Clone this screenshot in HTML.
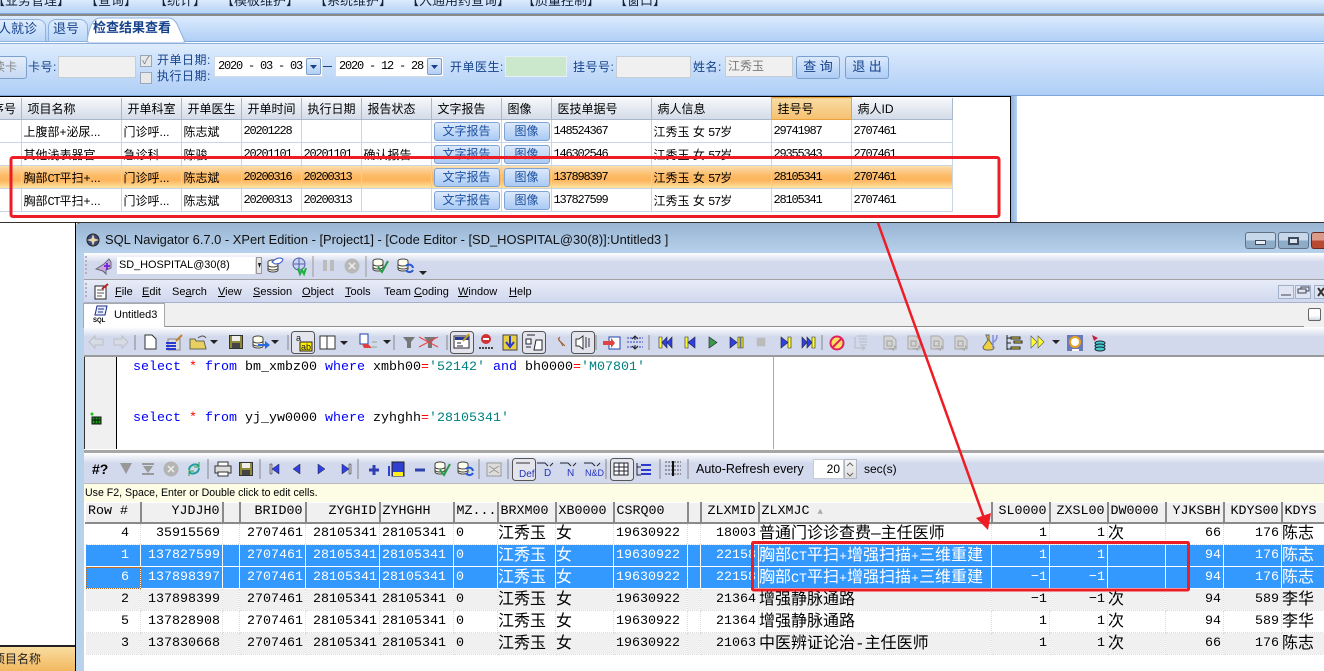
<!DOCTYPE html>
<html><head><meta charset="utf-8"><style>
html,body{margin:0;padding:0;width:1324px;height:671px;overflow:hidden;background:#fff}
body{position:relative;font:12px "Liberation Sans","Noto Sans CJK SC",sans-serif;color:#000}
.a{position:absolute;white-space:nowrap}
.l{color:#15428b;font-size:12px;line-height:14px;letter-spacing:.5px}
.top{position:absolute;white-space:nowrap;top:-6px;font-size:13px;line-height:14px;color:#15233c}
.inp{position:absolute;box-sizing:border-box;background:#f0f0f0;border:1px solid #c4ccd6}
.btn{position:absolute;box-sizing:border-box;border:1px solid #7c9fcc;border-radius:3px;background:linear-gradient(#dbe9fc,#aecdf6);color:#15428b;text-align:center}
table{border-collapse:collapse;table-layout:fixed;position:absolute}
.t1{left:0;top:97px;width:952px;font-size:12px}
.t1 th{height:22px;padding:0 0 0 6px;box-sizing:border-box;font-weight:400;text-align:left;background:linear-gradient(#f6f8fb,#d4dce8);border-right:1px solid #a9b8cc;border-bottom:1px solid #a9b8cc;overflow:hidden;white-space:nowrap}
.t1 th.o{background:linear-gradient(#f8dca4,#f5c06f);border:1px solid #eba23c}
.t1 td{height:23px;padding:0 0 0 2px;box-sizing:border-box;border-right:1px solid #c9d5e6;border-bottom:1px solid #c9d5e6;white-space:nowrap;overflow:hidden;position:relative}
.t1 tr.s td{background:linear-gradient(#fbdcaa,#fdbb68 40%,#fdb45c 62%,#fee7a6)}
.n{font-family:"Liberation Mono",monospace;letter-spacing:-1.2px}
.t1 td.b{padding:0}
.t1 td.b span{display:block;box-sizing:border-box;height:19px;line-height:17px;margin:0 1px 0 2px;border:1px solid #7fa3d2;border-radius:3px;background:linear-gradient(#dce9fb,#a9caf5);color:#1a4f9f;text-align:center}
.t2{left:85px;top:502px;width:1239px;font:13.33px/18px "Liberation Mono","Noto Sans CJK SC",monospace}
.t2 th{height:20px;line-height:16px;padding:0 2px;box-sizing:border-box;font-weight:400;background:#f0f0f0;border-top:1px solid #fff;border-left:1px solid #fff;border-right:2px solid #8a8a8a;border-bottom:2px solid #8a8a8a;white-space:nowrap;overflow:hidden;text-align:left}
.t2 th.r{text-align:right}
.t2 td{height:22px;padding:0 2px;box-sizing:border-box;border-right:1px dotted #ddd;border-bottom:1px dotted #ddd;white-space:nowrap;overflow:hidden;text-align:right}
.t2 td:first-child{padding-right:11px}
.t2 td.z{text-align:left;font-size:16px;padding-left:0}
.t2 td.z span{font-size:13.33px;line-height:1}
.t2 td.m{text-align:left}
.t2 tr.g td{background:#f0f0f0}
.t2 tr.x td{background:#3399ff;color:#fff;border-right:1px solid #fff;border-bottom:1px solid #fff}
.sql{font:13.33px/16px "Liberation Mono",monospace;color:#000}
.sql b{font-weight:400;color:#0000ff}.sql i{font-style:normal;color:#ff0000}.sql u{text-decoration:none;color:#008080}
.menu{position:absolute;white-space:nowrap;top:285px;font:11px/15px "Liberation Sans",sans-serif}
.menu u{text-decoration:underline}
.dt{position:absolute;box-sizing:border-box;top:56px;width:109px;height:21px;background:#fff;border:1px solid #d3dbe6;font:12px/19px "Liberation Mono",monospace;letter-spacing:-1.2px;padding-left:3px;white-space:pre}
</style></head><body>

<!-- main app -->
<div class="a" style="left:0;top:0;width:1324px;height:13px;background:linear-gradient(#dcebfd,#b5d2f6);border-bottom:1px solid #7da7da"></div>
<div class="a" style="left:0;top:14px;width:1324px;height:2px;background:#8a8a8a"></div>
<div class="top" style="left:-8px">【业务管理】</div>
<div class="top" style="left:85px">【查询】</div>
<div class="top" style="left:154px">【统计】</div>
<div class="top" style="left:221px">【模板维护】</div>
<div class="top" style="left:314px">【系统维护】</div>
<div class="top" style="left:406px">【入通用药查询】</div>
<div class="top" style="left:522px">【质量控制】</div>
<div class="top" style="left:614px">【窗口】</div>

<div class="a" style="left:0;top:16px;width:1324px;height:25px;background:linear-gradient(#dcebfd,#b0cff6);border-bottom:1px solid #7da7da"></div>
<div class="a" style="left:-30px;top:19px;width:76px;height:23px;box-sizing:border-box;border:1px solid #8fb2dd;border-radius:8px 8px 0 0;background:linear-gradient(#e0edfd,#bcd7f8)"></div>
<div class="a" style="left:-15px;top:21px;font-size:13px;line-height:16px;color:#15428b">病人就诊</div>
<div class="a" style="left:48px;top:19px;width:40px;height:23px;box-sizing:border-box;border:1px solid #8fb2dd;border-radius:8px 8px 0 0;background:linear-gradient(#e0edfd,#bcd7f8)"></div>
<div class="a" style="left:53px;top:21px;font-size:13px;line-height:16px;color:#15428b">退号</div>
<svg class="a" style="left:86px;top:17px" width="102" height="26" viewBox="0 0 102 26"><path d="M1 25Q4 1 14 1H82Q88 1 91 7L99 25z" fill="#fff" stroke="#8fb2dd"/><path d="M3 24h94" stroke="#fff" stroke-width="2"/></svg>
<div class="a" style="left:93px;top:20px;font-size:13px;line-height:16px;font-weight:700;color:#15428b">检查结果查看</div>

<div class="a" style="left:0;top:43px;width:1324px;height:51px;background:linear-gradient(#deecfd,#afcef6);border-bottom:1px solid #7da7da;border-top:1px solid #8db0dc"></div>

<div class="btn" style="left:-20px;top:56px;width:47px;height:23px;line-height:21px;color:#888;background:linear-gradient(#e6eefa,#c6d9f3);text-align:right;padding-right:9px">读卡</div>
<div class="a l" style="left:28px;top:60px">卡号:</div>
<div class="inp" style="left:58px;top:56px;width:78px;height:22px"></div>
<div class="a" style="left:140px;top:55px;width:12px;height:12px;box-sizing:border-box;border:1px solid #9aa7b8;background:#e8e8e8;color:#7a8494;font-size:11px;line-height:11px;text-align:center">✓</div>
<div class="a" style="left:140px;top:72px;width:12px;height:12px;box-sizing:border-box;border:1px solid #9aa7b8;background:#e8e8e8"></div>
<div class="a l" style="left:157px;top:52px;line-height:16px">开单日期:</div>
<div class="a l" style="left:157px;top:68px;line-height:16px">执行日期:</div>
<div class="dt" style="left:214px">2020 - 03 - 03</div>
<div class="a" style="left:306px;top:58px;width:15px;height:17px;box-sizing:border-box;border:1px solid #7b9ecb;border-radius:2px;background:linear-gradient(#e1edfc,#b2cff5)"></div>
<div class="a" style="left:323px;top:66px;width:9px;height:1px;background:#15428b"></div>
<div class="dt" style="left:335px">2020 - 12 - 28</div>
<div class="a" style="left:427px;top:58px;width:15px;height:17px;box-sizing:border-box;border:1px solid #7b9ecb;border-radius:2px;background:linear-gradient(#e1edfc,#b2cff5)"></div>
<div class="a l" style="left:450px;top:60px">开单医生:</div>
<div class="inp" style="left:505px;top:56px;width:62px;height:21px;background:#cce8cc;border:1px solid #e6eef8"></div>
<div class="a l" style="left:573px;top:60px">挂号号:</div>
<div class="inp" style="left:616px;top:56px;width:75px;height:22px"></div>
<div class="a l" style="left:693px;top:60px">姓名:</div>
<div class="inp" style="left:725px;top:56px;width:68px;height:21px;color:#777;line-height:18px;padding-left:2px">江秀玉</div>
<div class="btn" style="left:796px;top:56px;width:44px;height:23px;line-height:20px;font-size:13px">查 询</div>
<div class="btn" style="left:845px;top:56px;width:44px;height:23px;line-height:20px;font-size:13px">退 出</div>

<div class="a" style="left:0;top:96px;width:1011px;height:1px;background:#000"></div>
<div class="a" style="left:1010px;top:96px;width:1px;height:127px;background:#000"></div>
<div class="a" style="left:1011px;top:96px;width:6px;height:127px;background:linear-gradient(90deg,#8fb2de,#b5d0f2)"></div>
<div class="a" style="left:0;top:222px;width:1324px;height:1px;background:#333"></div>

<table class="t1"><colgroup><col style="width:21px"><col style="width:100px"><col style="width:60px"><col style="width:60px"><col style="width:60px"><col style="width:60px"><col style="width:70px"><col style="width:70px"><col style="width:50px"><col style="width:100px"><col style="width:120px"><col style="width:80px"><col style="width:101px"></colgroup>
<tr><th style="padding:0 0 0 0"><span style="margin-left:-8px">序号</span></th><th>项目名称</th><th>开单科室</th><th>开单医生</th><th>开单时间</th><th>执行日期</th><th>报告状态</th><th>文字报告</th><th>图像</th><th>医技单据号</th><th>病人信息</th><th class="o">挂号号</th><th>病人ID</th></tr>
<tr><td></td><td>上腹部+泌尿...</td><td>门诊呼...</td><td>陈志斌</td><td class="n">20201228</td><td></td><td></td><td class="b"><span>文字报告</span></td><td class="b"><span>图像</span></td><td class="n">148524367</td><td>江秀玉 女 <span class="n">57</span>岁</td><td class="n">29741987</td><td class="n">2707461</td></tr>
<tr><td></td><td>其他浅表器官</td><td>急诊科</td><td>陈骏</td><td class="n">20201101</td><td class="n">20201101</td><td>确认报告</td><td class="b"><span>文字报告</span></td><td class="b"><span>图像</span></td><td class="n">146302546</td><td>江秀玉 女 <span class="n">57</span>岁</td><td class="n">29355343</td><td class="n">2707461</td></tr>
<tr class="s"><td></td><td>胸部<span class="n">CT</span>平扫+...</td><td>门诊呼...</td><td>陈志斌</td><td class="n">20200316</td><td class="n">20200313</td><td></td><td class="b"><span>文字报告</span></td><td class="b"><span>图像</span></td><td class="n">137898397</td><td>江秀玉 女 <span class="n">57</span>岁</td><td class="n">28105341</td><td class="n">2707461</td></tr>
<tr><td></td><td>胸部<span class="n">CT</span>平扫+...</td><td>门诊呼...</td><td>陈志斌</td><td class="n">20200313</td><td class="n">20200313</td><td></td><td class="b"><span>文字报告</span></td><td class="b"><span>图像</span></td><td class="n">137827599</td><td>江秀玉 女 <span class="n">57</span>岁</td><td class="n">28105341</td><td class="n">2707461</td></tr>
</table>

<!-- bottom-left -->
<div class="a" style="left:75px;top:222px;width:1px;height:449px;background:#000"></div>
<div class="a" style="left:0;top:645px;width:75px;height:2px;background:#222"></div>
<div class="a" style="left:0;top:647px;width:75px;height:24px;background:linear-gradient(#f9dc9f,#f3b860)"></div>
<div class="a" style="left:-7px;top:651px;font-size:12px;line-height:16px;color:#222">项目名称</div>

<!-- SQL Navigator window -->
<div class="a" style="left:76px;top:222px;width:1248px;height:449px;background:#b9d2ec;border-radius:5px 0 0 0;border-top:1px solid #333;box-sizing:border-box"></div>
<div class="a" style="left:76px;top:223px;width:1248px;height:30px;background:linear-gradient(#99b5d3,#b7d1ec);border-radius:5px 0 0 0"></div>
<div class="a" style="left:105px;top:232px;font:12.9px/16px 'Liberation Sans',sans-serif;color:#111">SQL Navigator 6.7.0 - XPert Edition - [Project1] - [Code Editor - [SD_HOSPITAL@30(8)]:Untitled3 ]</div>
<div class="a" style="left:1245px;top:232px;width:31px;height:17px;box-sizing:border-box;border:1px solid #5e7186;border-radius:3px;background:linear-gradient(#c7d8ea 50%,#8eabc8 50%)"></div>
<div class="a" style="left:1278px;top:232px;width:31px;height:17px;box-sizing:border-box;border:1px solid #5e7186;border-radius:3px;background:linear-gradient(#c7d8ea 50%,#8eabc8 50%)"></div>
<div class="a" style="left:1311px;top:232px;width:13px;height:17px;box-sizing:border-box;border:1px solid #6a2a22;border-right:0;border-radius:3px 0 0 3px;background:linear-gradient(#dc9a8a 50%,#b84a32 50%)"></div>
<div class="a" style="left:1255px;top:240px;width:11px;height:5px;box-sizing:border-box;border:1px solid #3c4a5c;background:#e8eef6"></div>
<div class="a" style="left:1288px;top:237px;width:11px;height:8px;box-sizing:border-box;border:2px solid #3c4a5c;background:#dbe6f2"></div>

<!-- toolbar 1 -->
<div class="a" style="left:84px;top:253px;width:1240px;height:26px;background:linear-gradient(#fff,#d2d9ec 35%);border-bottom:1px solid #a0a0a0"></div>
<div class="a" style="left:117px;top:257px;width:138px;height:17px;background:#fff;font:10.9px/17px 'Liberation Sans',sans-serif;padding-left:2px;box-sizing:border-box">SD_HOSPITAL@30(8)</div>
<div class="a" style="left:256px;top:257px;width:6px;height:17px;background:#e6e6e6;border:1px solid #999;box-sizing:border-box"></div>

<!-- menu -->
<div class="a" style="left:84px;top:280px;width:1240px;height:22px;background:linear-gradient(#e8ecf8,#d0d8ee);border-bottom:1px solid #a9b2cc"></div>
<div class="menu" style="left:115px"><u>F</u>ile</div>
<div class="menu" style="left:142px"><u>E</u>dit</div>
<div class="menu" style="left:172px">Se<u>a</u>rch</div>
<div class="menu" style="left:218px"><u>V</u>iew</div>
<div class="menu" style="left:253px"><u>S</u>ession</div>
<div class="menu" style="left:302px"><u>O</u>bject</div>
<div class="menu" style="left:345px"><u>T</u>ools</div>
<div class="menu" style="left:384px">Team <u>C</u>oding</div>
<div class="menu" style="left:458px"><u>W</u>indow</div>
<div class="menu" style="left:509px"><u>H</u>elp</div>
<div class="a" style="left:1278px;top:285px;width:16px;height:14px;box-sizing:border-box;border:1px solid #9fb0c8;background:#dfe5f3"></div>
<div class="a" style="left:1295px;top:285px;width:16px;height:14px;box-sizing:border-box;border:1px solid #9fb0c8;background:#dfe5f3"></div>
<div class="a" style="left:1314px;top:285px;width:10px;height:14px;box-sizing:border-box;border:1px solid #9fb0c8;border-right:0;background:#dfe5f3"></div>

<!-- tab strip -->
<div class="a" style="left:84px;top:303px;width:1240px;height:25px;background:#f0f0f0"></div>
<div class="a" style="left:84px;top:326px;width:1220px;height:1px;background:#8f8f8f"></div>
<div class="a" style="left:83px;top:303px;width:82px;height:25px;box-sizing:border-box;background:#fff;border:1px solid #a8a8a8;border-bottom:0"></div>
<div class="a" style="left:114px;top:307px;font:11px/16px 'Liberation Sans',sans-serif">Untitled3</div>
<div class="a" style="left:93px;top:318px;font:bold 6px/7px 'Liberation Sans',sans-serif">SQL</div>
<div class="a" style="left:1308px;top:308px;width:13px;height:13px;box-sizing:border-box;border:1px solid #666;border-radius:2px;background:linear-gradient(#fff 60%,#cfd6e0)"></div>

<!-- toolbar 3 -->
<div class="a" style="left:84px;top:327px;width:1240px;height:28px;background:linear-gradient(#fff,#d2d9ec 35%);border-bottom:2px solid #9a9a9a"></div>

<!-- editor -->
<div class="a" style="left:84px;top:357px;width:1240px;height:92px;background:#fff"></div>
<div class="a" style="left:84px;top:357px;width:32px;height:92px;background:#f0f0f0;border-left:1px solid #333;box-sizing:border-box"></div>
<div class="a" style="left:116px;top:357px;width:1px;height:92px;background:#000"></div>
<div class="a" style="left:773px;top:357px;width:1px;height:92px;background:#aaa"></div>
<div class="a sql" style="left:133px;top:360px"><b>select</b> <i>*</i> <b>from</b> bm_xmbz00 <b>where</b> xmbh00<i>=</i><u>'52142'</u> <b>and</b> bh0000<i>=</i><u>'M07801'</u></div>
<div class="a sql" style="left:133px;top:411px"><b>select</b> <i>*</i> <b>from</b> yj_yw0000 <b>where</b> zyhghh<i>=</i><u>'28105341'</u></div>

<div class="a" style="left:84px;top:449px;width:1240px;height:4px;background:#a6a6a6;border-top:1px solid #fff;box-sizing:border-box"></div>
<!-- grid toolbar -->
<div class="a" style="left:84px;top:453px;width:1240px;height:31px;background:linear-gradient(#fff,#d2d9ec 35%);border-bottom:1px solid #bbb;box-sizing:border-box"></div>
<div class="a" style="left:92px;top:461px;font:bold 14px/16px 'Liberation Sans',sans-serif">#?</div>
<div class="a" style="left:696px;top:462px;font:12.5px/15px 'Liberation Sans',sans-serif">Auto-Refresh every</div>
<div class="a" style="left:813px;top:459px;width:31px;height:20px;box-sizing:border-box;border:1px solid #c6cbd6;background:#fff;text-align:right;padding-right:3px;font:12px/18px 'Liberation Sans',sans-serif">20</div>
<div class="a" style="left:844px;top:459px;width:13px;height:20px;box-sizing:border-box;border:1px solid #b0b6c2;background:linear-gradient(#f5f5f5,#ddd)"></div>
<div class="a" style="left:864px;top:462px;font:12px/15px 'Liberation Sans',sans-serif">sec(s)</div>

<div class="a" style="left:84px;top:484px;width:1240px;height:18px;background:#fdfde6"></div>
<div class="a" style="left:85px;top:486px;font:10.6px/14px 'Liberation Sans',sans-serif">Use F2, Space, Enter or Double click to edit cells.</div>

<div class="a" style="left:84px;top:502px;width:1240px;height:169px;background:#fff"></div>
<table class="t2"><colgroup><col style="width:55px"><col style="width:82px"><col style="width:17px"><col style="width:66px"><col style="width:74px"><col style="width:74px"><col style="width:44px"><col style="width:58px"><col style="width:58px"><col style="width:74px"><col style="width:13px"><col style="width:58px"><col style="width:233px"><col style="width:58px"><col style="width:58px"><col style="width:58px"><col style="width:58px"><col style="width:58px"><col style="width:43px"></colgroup>
<tr><th>Row #</th><th class="r">YJDJH0</th><th></th><th class="r">BRID00</th><th class="r">ZYGHID</th><th>ZYHGHH</th><th>MZ...</th><th>BRXM00</th><th>XB0000</th><th>CSRQ00</th><th></th><th class="r">ZLXMID</th><th>ZLXMJC <em style="font-style:normal;color:#aaa;font-size:9px">▲</em></th><th class="r">SL0000</th><th class="r">ZXSL00</th><th>DW0000</th><th class="r">YJKSBH</th><th class="r">KDYS00</th><th>KDYS</th></tr>
<tr><td>4</td><td>35915569</td><td></td><td>2707461</td><td>28105341</td><td class="m">28105341</td><td class="m">0</td><td class="z">江秀玉</td><td class="z">女</td><td class="m">19630922</td><td></td><td>18003</td><td class="z">普通门诊诊查费—主任医师</td><td>1</td><td>1</td><td class="z">次</td><td>66</td><td>176</td><td class="z">陈志</td></tr>
<tr class="x"><td>1</td><td>137827599</td><td></td><td>2707461</td><td>28105341</td><td class="m">28105341</td><td class="m">0</td><td class="z">江秀玉</td><td class="z">女</td><td class="m">19630922</td><td></td><td>22158</td><td class="z">胸部<span>CT</span>平扫<span>+</span>增强扫描<span>+</span>三维重建</td><td>1</td><td>1</td><td class="z"></td><td>94</td><td>176</td><td class="z">陈志</td></tr>
<tr class="x"><td style="outline:1px dotted #b5651d;outline-offset:-1px">6</td><td>137898397</td><td></td><td>2707461</td><td>28105341</td><td class="m">28105341</td><td class="m">0</td><td class="z">江秀玉</td><td class="z">女</td><td class="m">19630922</td><td></td><td>22158</td><td class="z">胸部<span>CT</span>平扫<span>+</span>增强扫描<span>+</span>三维重建</td><td>−1</td><td>−1</td><td class="z"></td><td>94</td><td>176</td><td class="z">陈志</td></tr>
<tr class="g"><td>2</td><td>137898399</td><td></td><td>2707461</td><td>28105341</td><td class="m">28105341</td><td class="m">0</td><td class="z">江秀玉</td><td class="z">女</td><td class="m">19630922</td><td></td><td>21364</td><td class="z">增强静脉通路</td><td>−1</td><td>−1</td><td class="z">次</td><td>94</td><td>589</td><td class="z">李华</td></tr>
<tr><td>5</td><td>137828908</td><td></td><td>2707461</td><td>28105341</td><td class="m">28105341</td><td class="m">0</td><td class="z">江秀玉</td><td class="z">女</td><td class="m">19630922</td><td></td><td>21364</td><td class="z">增强静脉通路</td><td>1</td><td>1</td><td class="z">次</td><td>94</td><td>589</td><td class="z">李华</td></tr>
<tr class="g"><td>3</td><td>137830668</td><td></td><td>2707461</td><td>28105341</td><td class="m">28105341</td><td class="m">0</td><td class="z">江秀玉</td><td class="z">女</td><td class="m">19630922</td><td></td><td>21063</td><td class="z">中医辨证论治-主任医师</td><td>1</td><td>1</td><td class="z">次</td><td>66</td><td>176</td><td class="z">陈志</td></tr>
</table>

<!-- icons -->
<svg class="a" style="left:0;top:0" width="1324" height="671" viewBox="0 0 1324 671">
<defs>
<g id="db"><ellipse cx="6" cy="3" rx="5" ry="2" fill="#ffe" stroke="#444"/><path d="M1 3v8c0 1 2 2 5 2s5-1 5-2V3M1 6c0 1 2 2 5 2s5-1 5-2M1 9c0 1 2 2 5 2s5-1 5-2" fill="#ffe" stroke="#444"/></g>
<g id="dbc"><use href="#db"/><path d="M6 9l4 5 6-11" fill="none" stroke="#2a9a4a" stroke-width="2"/></g>
<g id="dbs"><use href="#db"/><path d="M9 8a4 4 0 0 1 7 2M16 12a4 4 0 0 1-7 0" fill="none" stroke="#2a5ad0" stroke-width="2"/></g>
<g id="save"><rect x=".5" y=".5" width="13" height="13" fill="#8e8a3a" stroke="#333"/><rect x="3" y="1" width="8" height="5" fill="#eee"/><rect x="3" y="8" width="8" height="5" fill="#444"/></g>
<g id="ar"><path d="M0 0h8l-4 4z" fill="#222"/></g>
<g id="pb"><rect x=".5" y=".5" width="23" height="22" rx="3" fill="#e4e4ec" stroke="#555"/></g>
<g id="gray"><path d="M2 1h8l4 4v9H2z" fill="#d4d4d4" stroke="#a8a8a8"/><rect x="5" y="6" width="5" height="5" fill="none" stroke="#a0a0a0"/><path d="M6 13h9l-3-3v6z" fill="#aaa"/></g>
<g id="tb"><path d="M0 0h12l-4 5v6H4V5z" fill="#777"/></g>
</defs>
<!-- window logo -->
<circle cx="93" cy="240" r="6" fill="#3d4a7a" stroke="#222"/><path d="M93 234l1.500 4.500 4.500 1.500-4.500 1.500-1.500 4.500-1.500-4.500-4.500-1.500 4.500-1.500z" fill="#e8d8a8"/>
<!-- toolbar1 -->
<g fill="#b0b0c0"><rect x="85" y="256" width="2" height="2"/><rect x="85" y="260" width="2" height="2"/><rect x="85" y="264" width="2" height="2"/><rect x="85" y="268" width="2" height="2"/><rect x="85" y="272" width="2" height="2"/></g>
<path d="M96 269l8-5 5-5 2 3v6l-5 2v4l-3-3z" fill="#c8a8d8" stroke="#667"/><path d="M104 266h6M107 263v7" stroke="#7a2ad8" stroke-width="2"/>
<path d="M258 263h3l-1.500 5z" fill="#111"/>
<use href="#db" x="267" y="259"/><path d="M272 262q6-6 11-3-1 5-8 5z" fill="#fff" stroke="#3355cc"/>
<circle cx="299" cy="264" r="6" fill="#c8d2f2" stroke="#5560a8"/><path d="M293 264h12M299 258v12" stroke="#5560a8"/><path d="M298 268l2 6 2-4 2 4 2-6" fill="none" stroke="#20b040" stroke-width="2"/>
<path d="M313 256v21" stroke="#999"/><rect x="323" y="260" width="4" height="11" fill="#bbb"/><rect x="330" y="260" width="4" height="11" fill="#bbb"/>
<circle cx="352" cy="266" r="7.500" fill="#b8b8b8"/><path d="M349 263l6 6m0-6l-6 6" stroke="#eee" stroke-width="1.500"/><path d="M366 256v21" stroke="#999"/>
<use href="#dbc" x="372" y="258"/><use href="#dbs" x="397" y="258"/><use href="#ar" x="419" y="271"/>
<!-- menu icon -->
<rect x="95" y="286" width="11" height="13" fill="#fff" stroke="#222"/><path d="M97 290h7M97 293h7M97 296h5" stroke="#555"/><path d="M102 289l6-5" stroke="#c02020" stroke-width="2"/>
<g fill="#b0b0c0"><rect x="85" y="283" width="2" height="2"/><rect x="85" y="287" width="2" height="2"/><rect x="85" y="291" width="2" height="2"/><rect x="85" y="295" width="2" height="2"/></g>
<path d="M1281 295h10M1298 293h8v-4h-8zM1301 289v-2h8v4h-3" stroke="#445" fill="none"/><path d="M1318 288l6 8m0-8l-6 8" stroke="#333" stroke-width="2"/>
<!-- tab icon -->
<path d="M97 306h10l-2 9H95z" fill="#e8f0fb" stroke="#1a2a8a"/><path d="M98 309h6M98 312h5" stroke="#1a2a8a"/>
<!-- toolbar 3 -->
<g transform="translate(0 335)">
<path d="M89 7l6-6v3h8v6h-8v3z M128 7l-6-6v3h-8v6h8v3z" fill="#d7dbe3" stroke="#bcbfc8"/>
<path d="M135 0v15M288 0v15M394 0v15M447 0v15M596 0v15M649 0v15M822 0v15" stroke="#888"/>
<path d="M145 0h7l4 4v10h-11z" fill="#fff" stroke="#333"/>
<path d="M168 4h12v11h-12z" fill="#ddd" stroke="#888"/><path d="M166 8h10M166 11h10M166 14h10" stroke="#2a3ad0" stroke-width="2"/><path d="M176 6l6-6" stroke="#c08030" stroke-width="2"/>
<path d="M190 14V4h5l1 2h8l2 8z" fill="#e8d060" stroke="#665"/><path d="M198 3q5-4 8 0" fill="none" stroke="#555"/>
<use href="#ar" x="210" y="5"/><use href="#save" x="229" y="0"/><use href="#db" x="252" y="0"/><path d="M258 9h7v-3l5 4-5 4v-3h-7z" fill="#2a6ae0"/><use href="#ar" x="271" y="5"/>
</g>
<use href="#pb" x="291" y="331"/><text x="296" y="341" font-family="Liberation Sans" font-size="9" fill="#112">a</text><rect x="300" y="342" width="12" height="9" fill="#ffee00" stroke="#222"/><text x="301" y="350" font-family="Liberation Sans" font-size="9" fill="#112">ab</text>
<rect x="320" y="336" width="15" height="13" fill="#fff" stroke="#333"/><path d="M327 336v13" stroke="#333"/><use href="#ar" x="340" y="341"/>
<rect x="360" y="334" width="8" height="10" fill="#fff" stroke="#24a"/><path d="M362 344h6l4 4h-8z" fill="#e04040"/><path d="M372 342h5M372 347h5" stroke="#8a8"/><use href="#ar" x="383" y="340"/>
<use href="#tb" x="403" y="337"/><g transform="translate(424 337)"><use href="#tb"/><path d="M-5 0l19 10M14 0L-5 10" stroke="#f04040"/></g>
<use href="#pb" x="450" y="331"/><rect x="454" y="336" width="15" height="12" fill="#fff" stroke="#223"/><rect x="455" y="337" width="14" height="3" fill="#2a3a90"/><path d="M457 343h4M457 346h6" stroke="#223"/><path d="M463 341l6-7" stroke="#c0a020" stroke-width="2"/>
<circle cx="486" cy="339" r="5" fill="#d03030"/><rect x="483" y="338" width="6" height="2" fill="#fff"/><path d="M479 348h14" stroke="#444" stroke-width="2" stroke-dasharray="2 1"/>
<rect x="503" y="335" width="14" height="15" fill="#e8d040" stroke="#444"/><path d="M510 336v9m-4-3l4 5 4-5" fill="none" stroke="#2a3ad0" stroke-width="2"/>
<use href="#pb" x="522" y="331"/><path d="M527 335h8M526 339h5v5h-5zM526 347h5M536 340h6v10h-8z" fill="#fff" stroke="#223"/>
<path d="M558 338l5 8m-3-9q-3 3 1 5l4 4" fill="none" stroke="#a06030"/>
<use href="#pb" x="571" y="331"/><path d="M576 339h3l4-3v13l-4-3h-3z" fill="#fff" stroke="#333"/><path d="M586 337v11M589 338v9" stroke="#334"/>
<rect x="609" y="337" width="11" height="12" fill="#fff" stroke="#24a"/><path d="M603 341h8v-3l4 5-4 5v-3h-8z" fill="#e04040"/>
<path d="M627 338h16M627 347h16M627 342h16" stroke="#3344cc" stroke-dasharray="2 1"/><path d="M635 336v4m-3-1l3-3 3 3M635 349v-4m-3 1l3 3 3-3" fill="none" stroke="#222"/>
<!-- nav -->
<g transform="translate(0 337)" stroke="#223" stroke-width=".6">
<path d="M659 0h3v11h-3z" fill="#ffff30"/><path d="M667 0v11l-5-5.500zM672 0v11l-5-5.500z" fill="#3040e0"/>
<path d="M685 0h3v11h-3z" fill="#ffff30"/><path d="M695 0v11l-7-5.500z" fill="#3040e0"/>
<path d="M709 0v11l8-5.500z" fill="#3a9a4a"/>
<path d="M730 0v11l7-5.500z" fill="#3040e0"/><path d="M738 0h2v11h-2zM741 0h2v11h-2z" fill="#ffff30"/>
<rect x="757" y="1" width="8" height="8" fill="#bbb" stroke="#bbb"/>
<path d="M781 0v11l7-5.500z" fill="#3040e0"/><path d="M788 0h3v11h-3z" fill="#ffff30"/>
<path d="M802 0v11l5-5.500zM807 0v11l5-5.500z" fill="#3040e0"/><path d="M812 0h3v11h-3z" fill="#ffff30"/>
</g>
<path d="M855 337v11h9M857 336h10M859 339h8M859 342h8M860 345h7" stroke="#b8bcc4" fill="none"/><path d="M862 346l3 2-3 2" stroke="#b8bcc4" fill="none"/>
<circle cx="837" cy="343" r="6.500" fill="#ffe060" stroke="#e02060" stroke-width="2"/><path d="M832 348l10-10" stroke="#e02060" stroke-width="2"/>
<use href="#gray" x="882" y="335"/><use href="#gray" x="906" y="335"/><use href="#gray" x="929" y="335"/><use href="#gray" x="953" y="335"/>
<path d="M986 335h3v5l5 7q0 3-4 3h-3q-4 0-4-3l5-7z" fill="#f0d040" stroke="#665"/><path d="M993 335v13M997 335q0 6-4 7" stroke="#8090d8" stroke-width="1.500" fill="none"/>
<path d="M1007 335v15M1007 338h4M1007 343h4M1007 349h4" stroke="#222" fill="none"/><path d="M1011 337h9v2h-9zM1014 341h8v2h-8zM1011 347h9v2h-9z" fill="#f0e040" stroke="#222"/>
<path d="M1031 336l6 6-6 6zM1038 336l6 6-6 6z" fill="#ffff30" stroke="#555" stroke-width=".6"/><use href="#ar" x="1052" y="340"/>
<rect x="1067" y="335" width="16" height="16" fill="#6a7ab8"/><circle cx="1075" cy="342" r="5" fill="#fff" stroke="#eaa020" stroke-width="2"/><path d="M1072 350h7" stroke="#fff" stroke-width="2"/>
<path d="M1092 335l6 3-4 3z" fill="#c02040"/><ellipse cx="1100" cy="343" rx="5" ry="2" fill="#40d0d0" stroke="#223"/><ellipse cx="1100" cy="346" rx="5" ry="2" fill="#40d0d0" stroke="#223"/><ellipse cx="1100" cy="349" rx="5" ry="2" fill="#40d0d0" stroke="#223"/>
<!-- gutter icon -->
<circle cx="92" cy="414" r="1.500" fill="#20c020"/><rect x="92" y="417" width="9" height="7" fill="#14a014" stroke="#111"/><path d="M95 417v7M98 417v7M92 420h9" stroke="#111"/>
<!-- grid toolbar icons -->
<path d="M120 463h12l-6 11zM142 463h12v2h-12zM143 466h10l-5 7h-0zM142 473h12v2h-12z" fill="#999"/>
<circle cx="171" cy="469" r="7.500" fill="#b4b4b4"/><path d="M168 466l6 6m0-6l-6 6" stroke="#eee" stroke-width="1.500"/>
<path d="M189 470a6 6 0 0 1 10-4M199 468a6 6 0 0 1-10 4" fill="none" stroke="#20a0a0" stroke-width="2"/><path d="M199 462v5h-5M189 476v-5h5" fill="none" stroke="#30a040"/>
<path d="M208 459v20M260 459v20M358 459v20M479 459v20M508 459v20M606 459v20M660 459v20M688 459v20" stroke="#888"/>
<rect x="215" y="466" width="16" height="7" fill="#ddd" stroke="#333"/><rect x="218" y="462" width="10" height="4" fill="#fff" stroke="#333"/><rect x="218" y="472" width="10" height="4" fill="#fff" stroke="#333"/>
<use href="#save" x="239" y="462"/>
<g stroke="#223" stroke-width=".5"><path d="M270 464h2v10h-2z" fill="#ccc"/><path d="M279 464v10l-7-5z" fill="#3040e0"/><path d="M300 464v10l-7-5z" fill="#3040e0"/><path d="M318 464v10l7-5z" fill="#3040e0"/><path d="M342 464v10l7-5z" fill="#3040e0"/><path d="M349 464h2v10h-2z" fill="#ccc"/></g>
<path d="M369 470h10M374 465v10" stroke="#3040b0" stroke-width="3"/>
<rect x="392" y="462" width="12" height="14" fill="#3040d0" stroke="#222"/><rect x="393" y="472" width="10" height="4" fill="#ffee20"/><path d="M389 466v10" stroke="#3040d0" stroke-width="2"/>
<path d="M415 470h10" stroke="#3040b0" stroke-width="3"/>
<use href="#dbc" x="434" y="461"/><use href="#dbs" x="457" y="461"/>
<rect x="487" y="463" width="14" height="13" fill="#ddd" stroke="#999"/><path d="M489 466l5 3 5-3M489 473l5-3 5 3" fill="none" stroke="#999"/>
<use href="#pb" x="512" y="458"/><text x="519" y="477" font-family="Liberation Sans" font-size="10" fill="#2233bb">Def</text><path d="M516 463h14" stroke="#333"/>
<path d="M537 463h8l3 3M553 463l-3 3" stroke="#223" fill="none"/><text x="544" y="476" font-family="Liberation Sans" font-size="10" fill="#2233bb">D</text><path d="M560 463h8l3 3M576 463l-3 3" stroke="#223" fill="none"/><text x="567" y="476" font-family="Liberation Sans" font-size="10" fill="#2233bb">N</text><path d="M584 463h8l3 3M600 463l-3 3" stroke="#223" fill="none"/><text x="585" y="476" font-family="Liberation Sans" font-size="9" fill="#2233bb">N&amp;D</text>
<use href="#pb" x="610" y="458"/><rect x="614" y="463" width="14" height="12" fill="#fff" stroke="#223"/><path d="M614 467h14M614 471h14M619 463v12M624 463v12" stroke="#223"/>
<path d="M637 463v12h4M637 467h4" stroke="#223" fill="none"/><path d="M641 465h10M641 470h10M641 474h10" stroke="#2a3ad0" stroke-width="2"/>
<path d="M665 462h16M665 466h16M665 470h16M665 474h16" stroke="#555" stroke-dasharray="2 1"/><path d="M673 461v15" stroke="#111" stroke-width="2"/>
<path d="M847 466l3-3 3 3M847 473l3 3 3-3" fill="none" stroke="#666"/>
<!-- date arrows -->
<path d="M310 65h7l-3.500 4zM431 65h7l-3.500 4z" fill="#15428b"/>
</svg>

<!-- annotations -->
<svg class="a" style="left:0;top:0" width="1324" height="671" viewBox="0 0 1324 671">
<rect x="11" y="157.500" width="988" height="59" rx="2" fill="none" stroke="#ee1c25" stroke-width="3"/>
<rect x="752.500" y="542.500" width="436" height="47.500" rx="1" fill="none" stroke="#ee1c25" stroke-width="3"/>
<path d="M878 223L984 518" stroke="#ee1c25" stroke-width="2.500" fill="none"/>
<path d="M988 530L976 518L991 513z" fill="#ee1c25"/>
</svg>
</body></html>
